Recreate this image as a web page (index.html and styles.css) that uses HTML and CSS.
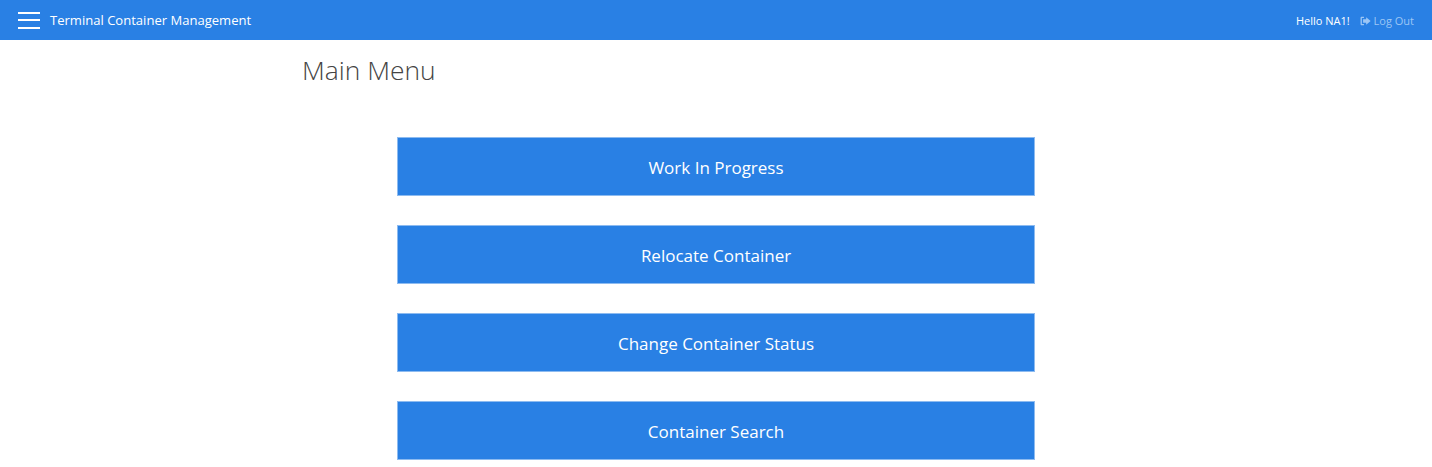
FILE: index.html
```html
<!DOCTYPE html>
<html lang="en">
<head>
    <meta charset="UTF-8">
    <title>Terminal Container Management</title>
    <link rel="stylesheet" href="styles.css">
</head>
<body>
    <div class="navbar">
        <div class="navbar-left">
            <button class="menu-toggle" aria-label="Menu">
                <span></span>
                <span></span>
                <span></span>
            </button>
            <span class="brand">Terminal Container Management</span>
        </div>
        <div class="navbar-right">
            <span class="hello">Hello NA1!</span>
            <a class="logout" href="#">
                <svg class="logout-icon" viewBox="0 0 10 9" width="11" height="10" aria-hidden="true">
                    <path d="M3.6 0.6H1.6C0.9 0.6 0.5 1 0.5 1.7V7.3C0.5 8 0.9 8.4 1.6 8.4H3.6V7.3H1.7V1.7H3.6Z"/>
                    <path d="M5.6 1L9.7 4.5L5.6 8V6H2.8V3H5.6Z"/>
                </svg>
                Log Out
            </a>
        </div>
    </div>

    <div class="content">
        <h1>Main Menu</h1>
        <div class="menu-list">
            <a class="menu-btn" href="#">Work In Progress</a>
            <a class="menu-btn" href="#">Relocate Container</a>
            <a class="menu-btn" href="#">Change Container Status</a>
            <a class="menu-btn" href="#">Container Search</a>
        </div>
    </div>
</body>
</html>
```

FILE: styles.css
```css
body {
    margin: 0;
    font-family: 'Open Sans', 'Noto Sans', sans-serif;
    background-color: #fff;
    color: #333;
}

.navbar {
    height: 40px;
    display: flex;
    justify-content: space-between;
    align-items: center;
    padding: 0 18px;
    background-color: #2980e4;
    color: #fff;
}

.navbar-left {
    display: flex;
    align-items: center;
    gap: 10px;
}

.menu-toggle {
    width: 22px;
    height: 17px;
    padding: 0;
    border: none;
    background: none;
    display: flex;
    flex-direction: column;
    justify-content: space-between;
}

.menu-toggle span {
    display: block;
    height: 2px;
    background-color: #fff;
}

.brand {
    font-size: 13.05px;
}

.navbar-right {
    display: flex;
    align-items: center;
    gap: 10px;
    font-size: 11px;
}

.logout {
    color: #9cc6f5;
    text-decoration: none;
}

.logout-icon {
    fill: #9cc6f5;
    vertical-align: -1px;
}

.content {
    width: 826px;
    margin: 0 auto;
}

h1 {
    margin: 0 0 0 -1px;
    padding-top: 11px;
    font-size: 26.4px;
    line-height: 38px;
    font-weight: 300;
    color: #444;
}

.menu-list {
    width: 638px;
    margin: 48px 0 0 94px;
    display: flex;
    flex-direction: column;
    gap: 29px;
}

.menu-btn {
    box-sizing: border-box;
    height: 59px;
    padding-top: 1px;
    display: flex;
    justify-content: center;
    align-items: center;
    border: 1px solid #8dbbf0;
    background-color: #2980e4;
    color: #fff;
    font-size: 17px;
    text-decoration: none;
}
```
